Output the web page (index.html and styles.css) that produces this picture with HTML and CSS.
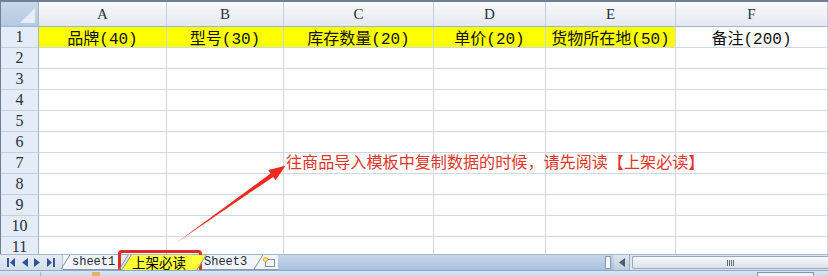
FILE: index.html
```html
<!DOCTYPE html>
<html lang="zh-CN">
<head>
<meta charset="utf-8">
<title>Excel 模板</title>
<link rel="stylesheet" href="styles.css">
</head>
<body>
<div class="app">
  <div class="grid">
    <div class="corner"><span class="tri"></span></div>
    <div class="ch">A</div><div class="ch">B</div><div class="ch">C</div><div class="ch">D</div><div class="ch">E</div><div class="ch ch-last">F</div>

    <div class="rh">1</div>
    <div class="c y">品牌(40)</div><div class="c y">型号(30)</div><div class="c y">库存数量(20)</div><div class="c y">单价(20)</div><div class="c y">货物所在地(50)</div><div class="c">备注(200)</div>

    <div class="rh">2</div><div class="c"></div><div class="c"></div><div class="c"></div><div class="c"></div><div class="c"></div><div class="c"></div>
    <div class="rh">3</div><div class="c"></div><div class="c"></div><div class="c"></div><div class="c"></div><div class="c"></div><div class="c"></div>
    <div class="rh">4</div><div class="c"></div><div class="c"></div><div class="c"></div><div class="c"></div><div class="c"></div><div class="c"></div>
    <div class="rh">5</div><div class="c"></div><div class="c"></div><div class="c"></div><div class="c"></div><div class="c"></div><div class="c"></div>
    <div class="rh">6</div><div class="c"></div><div class="c"></div><div class="c"></div><div class="c"></div><div class="c"></div><div class="c"></div>
    <div class="rh">7</div><div class="c"></div><div class="c"></div><div class="c"></div><div class="c"></div><div class="c"></div><div class="c"></div>
    <div class="rh">8</div><div class="c"></div><div class="c"></div><div class="c"></div><div class="c"></div><div class="c"></div><div class="c"></div>
    <div class="rh">9</div><div class="c"></div><div class="c"></div><div class="c"></div><div class="c"></div><div class="c"></div><div class="c"></div>
    <div class="rh">10</div><div class="c"></div><div class="c"></div><div class="c"></div><div class="c"></div><div class="c"></div><div class="c"></div>
    <div class="rh">11</div><div class="c"></div><div class="c"></div><div class="c"></div><div class="c"></div><div class="c"></div><div class="c"></div>
  </div>

  <svg class="arrow" width="828" height="276" viewBox="0 0 828 276">
    <polygon points="176,243 273.2,176.9 275.6,180.3 285.5,165.8 268.2,170.1 270.6,173.5" fill="#ec2a1f"/>
  </svg>
  <div class="note">往商品导入模板中复制数据的时候，请先阅读【上架必读】</div>

  <div class="tabbar">
    <div class="nav">
      <svg width="8" height="9" viewBox="0 0 8 9"><rect x="0" y="0" width="2" height="9" fill="#2f5496"/><polygon points="8,0 8,9 3,4.5" fill="#2f5496"/></svg>
      <svg width="6" height="9" viewBox="0 0 6 9"><polygon points="6,0 6,9 0,4.5" fill="#2f5496"/></svg>
      <svg width="6" height="9" viewBox="0 0 6 9"><polygon points="0,0 0,9 6,4.5" fill="#2f5496"/></svg>
      <svg width="8" height="9" viewBox="0 0 8 9"><polygon points="0,0 0,9 5,4.5" fill="#2f5496"/><rect x="6" y="0" width="2" height="9" fill="#2f5496"/></svg>
    </div>
    <div class="tab tab-first">sheet1</div>
    <div class="tab tab-active">上架必读</div>
    <div class="tab tab-third">Sheet3</div>
    <div class="tab tab-ins">
      <svg width="14" height="12" viewBox="0 0 14 12"><rect x="3.5" y="3.5" width="9" height="7" fill="#f4f7fb" stroke="#7d8ea8"/><circle cx="3.5" cy="3.5" r="2.6" fill="#f2b632"/><circle cx="3.5" cy="3.5" r="1.2" fill="#fff2b8"/></svg>
    </div>
    <div class="spacer"></div>
    <div class="hscroll">
      <div class="split"></div>
      <div class="sarrow"><svg width="6" height="9" viewBox="0 0 6 9"><polygon points="6,0 6,9 0,4.5" fill="#4a5a72"/></svg></div>
      <div class="track"><div class="thumb"><span class="grip"></span></div></div>
    </div>
  </div>
  <div class="hl-box"></div>
  <div class="status">
    <span class="st-sep"></span>
    <span class="st-icon"></span>
    <span class="st-box"></span>
  </div>
</div>
</body>
</html>
```

FILE: styles.css
```css
html, body {
  margin: 0;
  padding: 0;
  background: #ffffff;
}
.app {
  position: relative;
  width: 828px;
  height: 276px;
  overflow: hidden;
  font-family: "Liberation Serif", "Noto Sans CJK SC", serif;
}
.grid {
  box-sizing: border-box;
  height: 254px;
  overflow: hidden;
  border-top: 2px solid #6f7f95;
  border-left: 1px solid #6f7f95;
  display: grid;
  grid-template-columns: 38px 128px 117px 150px 112px 130px 1fr;
  grid-template-rows: 25px repeat(11, 21px);
}
.grid > div {
  box-sizing: border-box;
  border-right: 1px solid #d0d7e5;
  border-bottom: 1px solid #d0d7e5;
}
.corner {
  position: relative;
  background: linear-gradient(#c9d8ea, #b4c8e0);
  border-right: 1px solid #9eb6ce !important;
  border-bottom: 1px solid #9eb6ce !important;
}
.corner .tri {
  position: absolute;
  right: 3px;
  bottom: 3px;
  width: 0;
  height: 0;
  border-left: 15px solid transparent;
  border-bottom: 15px solid #e6edf6;
}
.ch {
  background: linear-gradient(#f9fafc, #e4e9f0);
  border-right: 1px solid #c5d1e0 !important;
  border-bottom: 1px solid #9eb6ce !important;
  display: flex;
  align-items: center;
  justify-content: center;
  font-size: 15px;
  color: #27313f;
  padding-top: 1px;
}
.rh {
  background: #e4ecf7;
  border-right: 1px solid #9eb6ce !important;
  border-bottom: 1px solid #c5d1e0 !important;
  display: flex;
  align-items: center;
  justify-content: center;
  font-size: 16px;
  color: #27313f;
}
.c {
  display: flex;
  align-items: center;
  justify-content: center;
  font-family: "Liberation Mono", "Noto Sans CJK SC", monospace;
  font-size: 16px;
  color: #111111;
  white-space: nowrap;
}
.c.y {
  background: #ffff00;
}
.arrow {
  position: absolute;
  left: 0;
  top: 0;
}
.note {
  position: absolute;
  left: 286px;
  top: 150px;
  font-family: "Noto Sans CJK SC", sans-serif;
  font-size: 16.1px;
  line-height: 22px;
  color: #e3342b;
  white-space: nowrap;
}
.tabbar {
  display: flex;
  align-items: stretch;
  height: 16px;
  background: linear-gradient(#e6ecf4, #d3deec);
  border-top: 1px solid #a6b7cd;
  box-sizing: border-box;
}
.nav {
  width: 63px;
  display: flex;
  align-items: center;
  justify-content: space-around;
  padding: 0 4px;
  box-sizing: border-box;
  border-right: 1px solid #b5c3d6;
}
.tab {
  position: relative;
  display: flex;
  align-items: center;
  height: 15px;
  padding: 0 5px 0 10px;
  font-family: "Liberation Mono", monospace;
  font-size: 12px;
  line-height: 14px;
  color: #1e2a3a;
  background: #f2f5f9;
  border-bottom: 1px solid #8a9ab0;
  box-sizing: border-box;
}
.tab::before {
  content: "";
  position: absolute;
  left: 2px;
  top: 0;
  bottom: 0;
  border-left: 1px solid #7f8fa8;
  transform: skewX(-32deg);
}
.tab-first {
  width: 58px;
  padding-left: 9px;
}
.tab-active {
  width: 79px;
  padding-left: 11px;
  font-family: "Noto Sans CJK SC", sans-serif;
  font-size: 13.5px;
  line-height: 14px;
  color: #000;
  background: transparent;
  border-bottom: none;
  z-index: 1;
  padding-bottom: 1px;
}
.tab-active::after {
  content: "";
  position: absolute;
  left: 5px;
  right: -2px;
  top: 0;
  bottom: 0;
  background: #ffff3a;
  transform: skewX(-32deg);
  z-index: -1;
  border-left: 1px solid #7f8fa8;
  border-right: 1px solid #7f8fa8;
}
.tab-third {
  padding-left: 4px;
  width: 56px;
}
.tab-third::before {
  display: none;
}
.tab-ins {
  width: 22px;
  padding: 0 0 0 6px;
}
.spacer {
  flex: 1;
  background: linear-gradient(#c6d6ea, #a9c0dd);
}
.hscroll {
  width: 226px;
  display: flex;
  background: linear-gradient(#c6d6ea, #a9c0dd);
}
.split {
  width: 6px;
  margin: 1px 3px 1px 3px;
  background: #f7f9fc;
  border: 1px solid #8899b2;
  box-sizing: border-box;
}
.sarrow {
  width: 15px;
  display: flex;
  align-items: center;
  justify-content: center;
  background: linear-gradient(#dde5ef, #c3cfde);
  border-right: 1px solid #9aabc2;
}
.track {
  flex: 1;
  padding: 1px 0 0 2px;
  background: #dfe5ed;
}
.thumb {
  height: 13px;
  display: flex;
  align-items: center;
  justify-content: center;
  background: linear-gradient(#f7f9fb, #dbe1ea);
  border: 1px solid #98a8be;
  border-right: none;
  border-radius: 2px 0 0 2px;
  box-sizing: border-box;
}
.grip {
  width: 7px;
  height: 6px;
  background: repeating-linear-gradient(90deg, #5f6d82 0 1px, transparent 1px 2px);
}
.hl-box {
  position: absolute;
  left: 118px;
  top: 250px;
  width: 84px;
  height: 24px;
  box-sizing: border-box;
  border: 3px solid #e02a24;
  border-radius: 4px;
}
.status {
  position: relative;
  height: 6px;
  background: linear-gradient(#dbe5f2, #cddbed);
  border-top: 1px solid #8fa6c4;
  box-sizing: border-box;
}
.st-sep {
  position: absolute;
  left: 40px;
  top: 1px;
  bottom: 0;
  border-left: 1px solid #a5b6cd;
}
.st-icon {
  position: absolute;
  left: 92px;
  top: 1px;
  width: 8px;
  height: 5px;
  background: #e4b070;
}
.st-box {
  position: absolute;
  left: 757px;
  top: 1px;
  width: 57px;
  height: 6px;
  border: 1px solid #8394ad;
  background: #eef2f7;
  box-sizing: border-box;
}
```
